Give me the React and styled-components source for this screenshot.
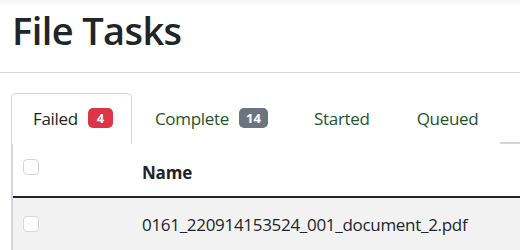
import React from "react";
import styled, { createGlobalStyle } from "styled-components";

const GlobalStyle = createGlobalStyle`
  body {
    margin: 0;
    background: #ffffff;
    font-family: "Open Sans", "Noto Sans", sans-serif;
    color: #212529;
  }
`;

const Page = styled.div`
  width: 520px;
  height: 250px;
  overflow: hidden;
  background: linear-gradient(to bottom, #f6f6f6 0px, #ffffff 6px);
`;

const Title = styled.h1`
  margin: 0;
  padding: 6px 0 0 12px;
  font-size: 38px;
  font-weight: 600;
  line-height: 48px;
  letter-spacing: -0.6px;
  color: #212529;
`;

const Rule = styled.hr`
  margin: 18px 0 0 0;
  border: 0;
  border-top: 1px solid #d6d8db;
`;

const TabBar = styled.div`
  display: flex;
  margin: 20px 0 0 11px;
  border-bottom: 2px solid #d2d5d9;
`;

const Tab = styled.div`
  display: flex;
  align-items: center;
  gap: 10px;
  height: 48px;
  padding: 0 ${(p) => p.$right}px 2px ${(p) => p.$left}px;
  font-size: 17px;
  letter-spacing: -0.3px;
  color: ${(p) => (p.$active ? "#212529" : "#24532e")};
  background: #ffffff;
  border: 1px solid ${(p) => (p.$active ? "#d2d5d9" : "transparent")};
  border-bottom: 0;
  border-radius: 5px 5px 0 0;
  margin-bottom: -2px;
`;

const Badge = styled.span`
  display: inline-flex;
  align-items: center;
  justify-content: center;
  min-width: 25px;
  height: 20px;
  padding: 0 7px;
  box-sizing: border-box;
  border-radius: 5px;
  background: ${(p) => p.$bg};
  color: #ffffff;
  font-size: 13px;
  font-weight: 700;
  letter-spacing: 0;
`;

const Panel = styled.div`
  margin-left: 11px;
  border-left: 2px solid #d2d5d9;
`;

const Table = styled.div`
  display: grid;
  grid-template-columns: 119px 1fr;
`;

const HeadCell = styled.div`
  height: 54px;
  display: flex;
  align-items: flex-end;
  padding: 0 0 12px 10px;
  box-sizing: border-box;
  font-size: 17px;
  font-weight: 700;
  letter-spacing: -0.2px;
  border-bottom: 2px solid #212529;
`;

const CheckHead = styled(HeadCell)`
  align-items: flex-start;
  padding-top: 15px;
`;

const Cell = styled.div`
  height: 52px;
  display: flex;
  align-items: center;
  padding: 0 0 0 10px;
  box-sizing: border-box;
  background: #f2f2f2;
  font-size: 17px;
  letter-spacing: -0.3px;
  color: #212529;
`;

const CheckCell = styled(Cell)`
  align-items: flex-start;
  padding-top: 18px;
`;

const Check = styled.span`
  display: block;
  width: 16px;
  height: 16px;
  box-sizing: border-box;
  border: 1px solid #d3d6d9;
  border-radius: 4px;
  background: #ffffff;
`;

const App = () => {
  return (
    <Page>
      <GlobalStyle />
      <Title>File Tasks</Title>
      <Rule />
      <TabBar>
        <Tab $active $left={21} $right={18}>
          Failed <Badge $bg="#dc3545">4</Badge>
        </Tab>
        <Tab $left={22} $right={21}>
          Complete <Badge $bg="#6c757d">14</Badge>
        </Tab>
        <Tab $left={23} $right={21}>
          Started
        </Tab>
        <Tab $left={24} $right={21}>
          Queued
        </Tab>
      </TabBar>
      <Panel>
        <Table>
          <CheckHead>
            <Check />
          </CheckHead>
          <HeadCell>Name</HeadCell>
          <CheckCell>
            <Check />
          </CheckCell>
          <Cell>0161_220914153524_001_document_2.pdf</Cell>
        </Table>
      </Panel>
    </Page>
  );
};

export default App;
